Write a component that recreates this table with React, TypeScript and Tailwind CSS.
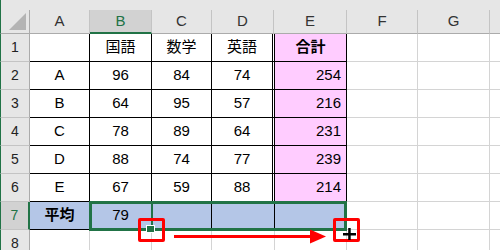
import React from 'react';

type Col = { id: string; label: string; w: string; hw: string };

// body cell widths and header widths differ slightly around the double border
const COLS: Col[] = [
  { id: 'A', label: 'A', w: 'w-[60px]', hw: 'w-[60px]' },
  { id: 'B', label: 'B', w: 'w-[62px]', hw: 'w-[62px]' },
  { id: 'C', label: 'C', w: 'w-[60px]', hw: 'w-[60px]' },
  { id: 'D', label: 'D', w: 'w-[63px]', hw: 'w-[62px]' },
  { id: 'E', label: 'E', w: 'w-[72px]', hw: 'w-[73px]' },
  { id: 'F', label: 'F', w: 'w-[71px]', hw: 'w-[71px]' },
  { id: 'G', label: 'G', w: 'w-[72px]', hw: 'w-[72px]' },
  { id: 'H', label: '', w: 'w-[60px]', hw: 'w-[60px]' },
];

const ROWS: string[][] = [
  ['', '国語', '数学', '英語', '合計'],
  ['A', '96', '84', '74', '254'],
  ['B', '64', '95', '57', '216'],
  ['C', '78', '89', '64', '231'],
  ['D', '88', '74', '77', '239'],
  ['E', '67', '59', '88', '214'],
  ['平均', '79', '', '', ''],
  [],
];

const font = "font-['Liberation_Sans','Noto_Sans_CJK_JP',sans-serif]";

function cellClass(r: number, c: number) {
  const inTable = r <= 7 && c <= 4;
  if (!inTable) return 'border-r border-b border-[#d4d4d4]';
  let cls = 'border-b border-black ';
  if (c === 3 && r < 7) cls += 'border-r-[3px] border-double ';
  else cls += 'border-r ';
  if (r === 7) cls += 'bg-[#b4c6e7] ';
  else if (c === 4) cls += 'bg-[#ffccff] ';
  if ((r === 1 && c === 4) || (r === 7 && c === 0)) cls += 'font-bold justify-center ';
  else if (c === 4 && r > 1) cls += 'justify-end pr-[5px] ';
  else cls += 'justify-center ';
  return cls;
}

function HeaderRow() {
  return (
    <div className="h-[34px] bg-[#e6e6e6] flex flex-col">
      <div className="h-[10px] border-l border-[#217346]" />
      <div className="flex h-[24px]">
        <div className="w-[30px] shrink-0 border-l border-[#217346] border-r border-r-[#ababab] border-b border-b-[#ababab] relative">
          <svg className="absolute left-[7px] top-[3px]" width="19" height="18" viewBox="0 0 19 18">
            <polygon points="1,17 18,0 18,17" fill="#b4b4b4" />
          </svg>
        </div>
        {COLS.map((col) => {
          const sel = col.id === 'B';
          return (
            <div
              key={col.id}
              className={`${col.hw} shrink-0 flex items-center justify-center text-[15px] border-r border-[#c4c4c4] ${
                sel
                  ? 'bg-[#d2d2d2] text-[#217346] border-b-2 border-b-[#217346]'
                  : 'text-[#333] border-b border-b-[#ababab]'
              }`}
            >
              {col.label}
            </div>
          );
        })}
      </div>
    </div>
  );
}

function SheetRow({ n, cells }: { n: number; cells: string[] }) {
  const sel = n === 7;
  return (
    <div className="flex h-[28px]">
      <div
        className={`w-[30px] shrink-0 flex items-center justify-center text-[14px] border-l border-[#217346] border-b border-b-[#c4c4c4] ${
          sel
            ? 'bg-[#d2d2d2] text-[#217346] border-r-2 border-r-[#217346]'
            : 'bg-[#e6e6e6] text-[#222] border-r border-r-[#ababab]'
        }`}
      >
        {n}
      </div>
      {COLS.map((col, c) => (
        <div
          key={col.id}
          className={`${col.w} shrink-0 flex items-center text-[15px] text-black ${cellClass(n, c)}`}
        >
          {cells[c] ?? ''}
        </div>
      ))}
    </div>
  );
}

export default function App() {
  return (
    <div className={`w-[500px] h-[250px] overflow-hidden relative bg-white ${font}`}>
      <HeaderRow />
      {ROWS.map((cells, i) => (
        <SheetRow key={i} n={i + 1} cells={cells} />
      ))}

      {/* fill range outline */}
      <div className="absolute left-[89px] top-[201px] w-[258px] h-[30px] border-[3px] border-[#217346]" />
      <div className="absolute left-[151px] top-[201px] w-[2px] h-[30px] bg-[#217346]" />
      <div className="absolute left-[147px] top-[226px] w-[7px] h-[6px] bg-[#217346] outline outline-1 outline-white" />

      {/* callouts */}
      <div className="absolute left-[138px] top-[218px] w-[27px] h-[24px] border-[3px] border-[#ff0000] rounded-[2px]" />
      <div className="absolute left-[333px] top-[218px] w-[27px] h-[24px] border-[3px] border-[#ff0000] rounded-[2px]" />
      <svg className="absolute left-[170px] top-[226px]" width="160" height="20" viewBox="0 0 160 20">
        <rect x="4" y="9" width="138" height="3" fill="#ff0000" />
        <polygon points="140,3.5 156,10.5 140,17.5" fill="#ff0000" />
      </svg>
      <svg className="absolute left-[342px] top-[227px]" width="15" height="14" viewBox="0 0 15 14">
        <rect x="1" y="6" width="13" height="2.5" fill="#000" />
        <rect x="6.2" y="1" width="2.5" height="12" fill="#000" />
      </svg>
    </div>
  );
}
